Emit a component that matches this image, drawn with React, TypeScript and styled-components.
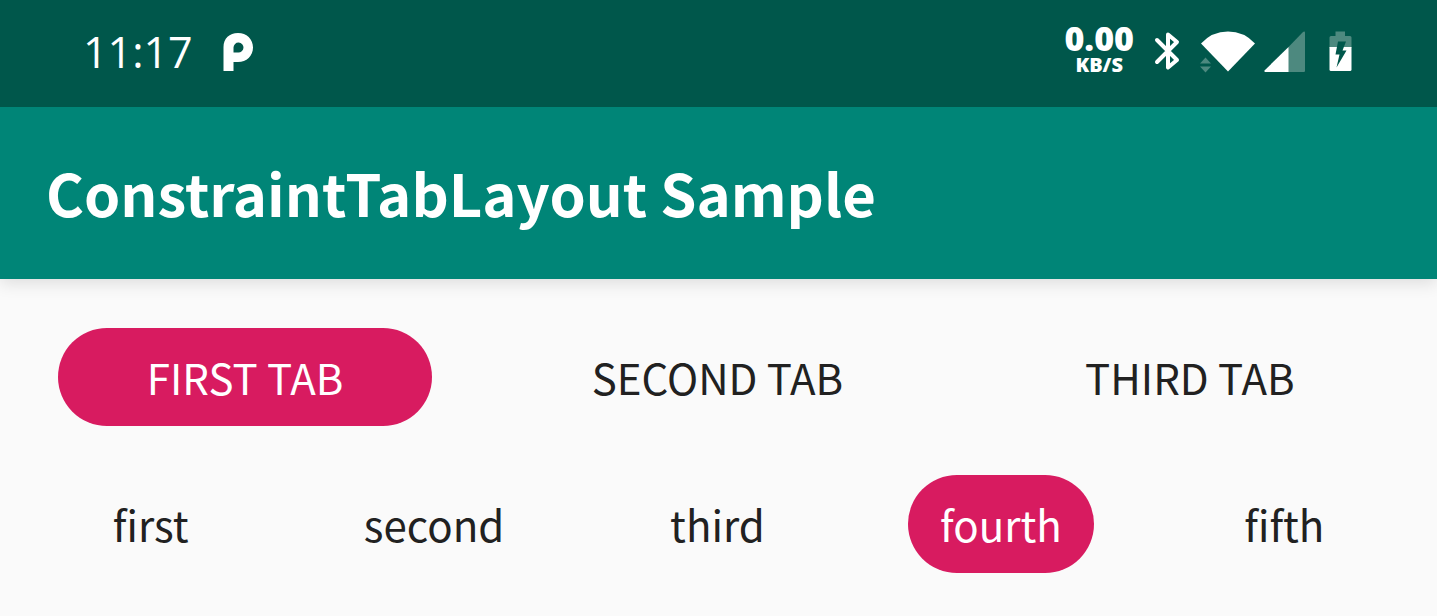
import React, { useState } from "react";
import styled, { createGlobalStyle } from "styled-components";

const GlobalStyle = createGlobalStyle`
  *, *::before, *::after { box-sizing: border-box; }
  body {
    margin: 0;
    background: #fafafa;
    font-family: "Noto Sans CJK SC", "Noto Sans", sans-serif;
  }
`;

const Screen = styled.div`
  min-height: 100vh;
  background: #fafafa;
`;

const StatusBar = styled.div`
  position: relative;
  z-index: 1;
  display: flex;
  align-items: center;
  justify-content: space-between;
  height: 107px;
  padding: 0 85px 4px 83px;
  background: #00574b;
  color: #fff;
  font-family: "Open Sans", sans-serif;
`;

const StatusGroup = styled.div`
  display: flex;
  align-items: center;
`;

const Clock = styled.time`
  margin-right: 30px;
  font-size: 43px;
  font-weight: 400;
  line-height: 56px;
`;

const NetworkSpeed = styled.div`
  display: flex;
  flex-direction: column;
  align-items: center;
  margin-right: 20px;
  font-weight: 800;
`;

const SpeedValue = styled.span`
  font-size: 34px;
  line-height: 26px;
`;

const SpeedUnit = styled.span`
  font-size: 20px;
  line-height: 28px;
`;

const Icon = styled.svg<{ $gap?: number }>`
  display: block;
  flex: none;
  margin-right: ${({ $gap }) => $gap ?? 0}px;
`;

const AppBar = styled.header`
  display: flex;
  align-items: center;
  height: 172px;
  padding: 0 46px 2px;
  background: #008577;
  color: #fff;
  box-shadow: 0 4px 16px rgba(0, 0, 0, 0.12);
`;

const Title = styled.h1`
  margin: 0;
  font-size: 58px;
  font-weight: 700;
  line-height: 80px;
  white-space: nowrap;
`;

const Content = styled.main`
  display: flex;
  flex-direction: column;
  gap: 49px;
  padding: 49px 60px 43px 58px;
`;

const TabRow = styled.div`
  display: grid;
  grid-auto-flow: column;
  grid-auto-columns: minmax(0, 1fr);
  gap: 98px;
`;

const Tab = styled.button<{ $selected: boolean }>`
  height: 98px;
  padding: 0;
  border: 0;
  border-radius: 49px;
  background: ${({ $selected }) => ($selected ? "#d81b60" : "transparent")};
  color: ${({ $selected }) => ($selected ? "#fff" : "#212121")};
  font-family: inherit;
  font-size: 42px;
  font-weight: 400;
  line-height: 56px;
  white-space: nowrap;
  cursor: pointer;
`;

type TabsProps = { label: string; items: string[]; initial: number };

function Tabs({ label, items, initial }: TabsProps) {
  const [selected, setSelected] = useState(initial);
  return (
    <TabRow role="tablist" aria-label={label}>
      {items.map((item, index) => (
        <Tab
          key={item}
          type="button"
          role="tab"
          aria-selected={index === selected}
          $selected={index === selected}
          onClick={() => setSelected(index)}
        >
          {item}
        </Tab>
      ))}
    </TabRow>
  );
}

function ParkingIcon() {
  return (
    <Icon width="32" height="40" viewBox="0 0 32 40" aria-hidden="true">
      <path
        fill="#fff"
        fillRule="evenodd"
        d="M0.500 39V15C0.500 6.500 6.500 1 15 1C23.500 1 30 7 30 15.500C30 24 23.500 30 15 30H10.500V39ZM10.500 20.500H15A5 5 0 1 0 10.500 15.500Z"
      />
    </Icon>
  );
}

function BluetoothIcon() {
  return (
    <Icon $gap={20} width="26" height="40" viewBox="0 0 26 40" aria-hidden="true">
      <path
        fill="none"
        stroke="#fff"
        strokeWidth="4"
        strokeLinecap="round"
        strokeLinejoin="round"
        d="M3 8L23 28L14 35.500V2.500L23 10L3 30"
      />
    </Icon>
  );
}

function WifiIcon() {
  return (
    <Icon $gap={8} width="56" height="42" viewBox="0 0 56 42" aria-hidden="true">
      <path fill="#fff" d="M28 40.500L1 12.500Q12 0.500 28 0.500T55 12.500Z" />
      <path fill="#4d897f" d="M0 32.500L5.500 26.500L11 32.500ZM0 35.500H11L5.500 41.500Z" />
    </Icon>
  );
}

function SignalIcon() {
  return (
    <Icon $gap={24} width="41" height="42" viewBox="0 0 41 42" aria-hidden="true">
      <path fill="#4d897f" d="M24 16.500L39 1Q41 0 41 1.500V39.500Q41 41 40 41H24Z" />
      <path fill="#fff" d="M24.500 16V41H1Q0 40.500 0.500 39.500Z" />
    </Icon>
  );
}

function BatteryIcon() {
  return (
    <Icon width="23" height="42" viewBox="0 0 23 42" aria-hidden="true">
      <path fill="#4d897f" d="M6.500 0.500H16V5H21Q22.500 5 22.500 6.500V17H0.500V6.500Q0.500 5 2 5H6.500Z" />
      <path fill="#fff" d="M0.500 16H22.500V38.500Q22.500 40 21 40H2Q0.500 40 0.500 38.500Z" />
      <path fill="#00574b" d="M9 10.500H17L13.500 19.500H17.500L7.500 36.500L10.500 23.500H6.500Z" />
    </Icon>
  );
}

export default function App() {
  return (
    <>
      <GlobalStyle />
      <Screen>
        <StatusBar>
          <StatusGroup>
            <Clock>11:17</Clock>
            <ParkingIcon />
          </StatusGroup>
          <StatusGroup>
            <NetworkSpeed>
              <SpeedValue>0.00</SpeedValue>
              <SpeedUnit>KB/S</SpeedUnit>
            </NetworkSpeed>
            <BluetoothIcon />
            <WifiIcon />
            <SignalIcon />
            <BatteryIcon />
          </StatusGroup>
        </StatusBar>
        <AppBar>
          <Title>ConstraintTabLayout Sample</Title>
        </AppBar>
        <Content>
          <Tabs label="Main tabs" items={["FIRST TAB", "SECOND TAB", "THIRD TAB"]} initial={0} />
          <Tabs label="Secondary tabs" items={["first", "second", "third", "fourth", "fifth"]} initial={3} />
        </Content>
      </Screen>
    </>
  );
}
